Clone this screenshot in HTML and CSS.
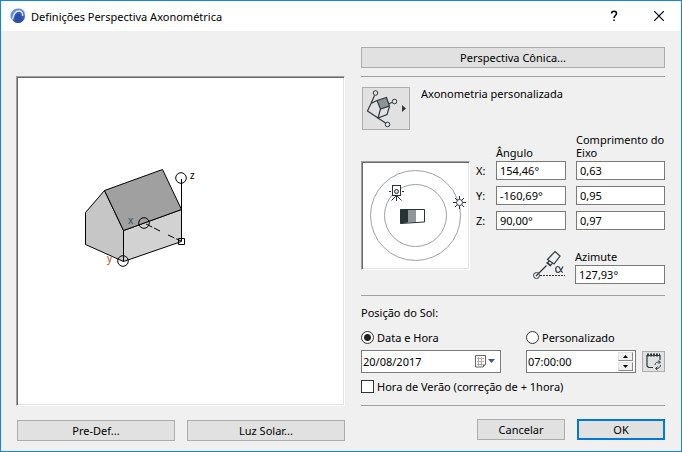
FILE: index.html
```
<!DOCTYPE html>
<html lang="pt-BR">
<head>
    <meta charset="utf-8">
    <title>Definições Perspectiva Axonométrica</title>
    <link rel="stylesheet" href="styles.css">
</head>
<body>
    <div class="window">
        <header class="titlebar">
            <svg class="logo" width="16" height="16" viewBox="0 0 16 16">
                <circle cx="8" cy="8" r="7" fill="#3f62b8"/>
                <path d="M0.500 9C0 3 5 0 9 0.500c4 0.500 6 3 6.500 6-2-4-5-5-8-3.500C4.500 4.500 3 7 2.500 11.500 1.500 11 0.800 10 0.500 9z" fill="#5f8ff0"/>
                <path d="M2.500 11.500C3.500 6 6 3 9 3c3 0 3.800 2.500 3.800 5" fill="none" stroke="#e6effc" stroke-width="1.300"/>
                <path d="M4 13.500C4.500 9 6 5.500 8.500 5.500c2.500 0 2.700 4 4.500 7-2.500 3-6.500 3-9 1z" fill="#2c50aa"/>
            </svg>
            <h1 class="title">Definições Perspectiva Axonométrica</h1>
            <button class="title-btn" aria-label="Ajuda">
                <svg width="10" height="12" viewBox="0 0 10 12">
                    <path d="M2.500 3.500C2.500 0.500 7.500 0.500 7.500 3.500 7.500 5.500 5 5.500 5 8M5 9.500v1.500" fill="none" stroke="#000" stroke-width="1.500"/>
                </svg>
            </button>
            <button class="title-btn" aria-label="Fechar">
                <svg width="10" height="10" viewBox="0 0 10 10">
                    <path d="M0 0l10 10M10 0L0 10" stroke="#000" stroke-width="1.200"/>
                </svg>
            </button>
        </header>

        <main class="content">
            <section class="left">
                <div class="frame preview">
                    <svg width="180" height="200" viewBox="18 78 180 200">
                        <g stroke="#000" stroke-linejoin="round">
                            <polygon points="85.500,212.500 104.500,190.500 123.500,230.500 123.500,261.500 85.500,244.500" fill="#c6c6c6"/>
                            <polygon points="123.500,230.500 181.500,209.500 181.500,241.500 123.500,261.500" fill="#d2d2d2"/>
                            <polygon points="104.500,190.500 162.500,169.500 181.500,209.500 123.500,230.500" fill="#a0a0a0"/>
                            <path d="M181.500 179v62" fill="none"/>
                            <path d="M146 224l14 7M168 235l13 6" fill="none" stroke-dasharray="7 2"/>
                            <circle cx="181" cy="178" r="5.300" fill="#fff"/>
                            <path d="M181.500 179v6"/>
                            <circle cx="144" cy="223" r="5.300" fill="none"/>
                            <circle cx="123" cy="261" r="5.300" fill="none"/>
                            <rect x="178.500" y="238.500" width="6" height="6" fill="none"/>
                        </g>
                        <text class="axis axis-z" x="190" y="175">z</text>
                        <text class="axis axis-x" x="128" y="220">x</text>
                        <text class="axis axis-y" x="107" y="258">y</text>
                    </svg>
                </div>
                <div class="preview-buttons">
                    <button class="btn">Pre-Def...</button>
                    <button class="btn">Luz Solar...</button>
                </div>
            </section>

            <section class="right">
                <button class="btn">Perspectiva Cônica...</button>
                <hr class="top-line">

                <div class="projection">
                    <button class="projection-btn" aria-label="Tipo de axonometria">
                        <svg width="46" height="41" viewBox="363 88 46 41">
                            <g fill="none" stroke="#2b3a40">
                                <path d="M374.500 95.500L371 103.500L367.500 111 378 118l7.500 5M371 103.500l6-3M380.500 109l-2.500 9 9-3.500 2.500-8M392 102.500l-4 1.500" stroke-width="1.200"/>
                                <polygon points="377,100.500 386.500,97.500 389.500,106 380.500,109" fill="#8d9498" stroke-width="1.200"/>
                                <circle cx="375.500" cy="93" r="2.300"/>
                                <circle cx="394.500" cy="101.500" r="2.300"/>
                                <circle cx="387.500" cy="124.500" r="2.300"/>
                            </g>
                            <path d="M402 105v7l4-3.500z" fill="#2b3a40"/>
                        </svg>
                    </button>
                    <span>Axonometria personalizada</span>
                </div>

                <div class="axes">
                    <div class="frame sun-map">
                        <svg width="105" height="105" viewBox="363 163 105 105">
                            <g fill="none" stroke="#9aa0a2">
                                <circle cx="415.500" cy="215.500" r="45"/>
                                <circle cx="415.500" cy="215.500" r="31"/>
                            </g>
                            <path d="M400 209.500h8v13l-8 1z" fill="#263238"/>
                            <path d="M408 209.500h8v13h-8z" fill="#90969a"/>
                            <path d="M400.500 209.500h24v12.500l-24 1.500z" fill="none" stroke="#263238"/>
                            <rect x="392.500" y="185.500" width="8" height="10" fill="#fff" stroke="#263238"/>
                            <circle cx="396.500" cy="191.500" r="2" fill="#ddd" stroke="#263238"/>
                            <path d="M389 191.500h2M402 191.500h2M396.500 196v5M396 196l-4.500 4.500M397 196l4.500 4.500" stroke="#263238"/>
                            <circle cx="459.500" cy="202.500" r="3" fill="#fff" stroke="#263238"/>
                            <path d="M459.500 196v3M459.500 206v3M453 202.500h3M463 202.500h3M455 198l2 2M462 205l2 2M464 198l-2 2M457 205l-2 2" stroke="#263238"/>
                        </svg>
                    </div>
                    <table class="axis-table">
                        <thead>
                            <tr>
                                <td></td>
                                <th id="angle">Ângulo</th>
                                <th id="len">Comprimento do Eixo</th>
                            </tr>
                        </thead>
                        <tbody>
                            <tr>
                                <th id="rx">X:</th>
                                <td><input type="text" aria-labelledby="rx angle" value="154,46°"></td>
                                <td><input type="text" aria-labelledby="rx len" value="0,63"></td>
                            </tr>
                            <tr>
                                <th id="ry">Y:</th>
                                <td><input type="text" aria-labelledby="ry angle" value="-160,69°"></td>
                                <td><input type="text" aria-labelledby="ry len" value="0,95"></td>
                            </tr>
                            <tr>
                                <th id="rz">Z:</th>
                                <td><input type="text" aria-labelledby="rz angle" value="90,00°"></td>
                                <td><input type="text" aria-labelledby="rz len" value="0,97"></td>
                            </tr>
                        </tbody>
                    </table>
                    <div class="azimuth">
                        <svg width="32" height="30" viewBox="534 254 32 30">
                            <g fill="none" stroke="#2b3a40">
                                <circle cx="537.500" cy="279.500" r="3"/>
                                <path d="M537 280l10.500-10.500" stroke-width="1.200"/>
                                <path d="M541 279.500h25" stroke-dasharray="2 1"/>
                                <path d="M556 255.500l5 4.500-6 8-6.500-4.500zM550.500 265l-2 1.500 3 3 2-2.500M547.500 266.500l4 3.500" stroke-width="1.200"/>
                                <path d="M564 270.500c-1.500 3-3 6-5 6-3 0-3-6 0-6 2.500 0 2.500 6 5 6" stroke-width="1.200"/>
                            </g>
                        </svg>
                        <div class="azimuth-field">
                            <label for="azimuth">Azimute</label>
                            <input type="text" id="azimuth" value="127,93°">
                        </div>
                    </div>
                </div>
                <hr>

                <div class="sun">
                    <p class="sun-title">Posição do Sol:</p>
                    <label class="option"><input type="radio" name="sun" checked>Data e Hora</label>
                    <label class="option"><input type="radio" name="sun">Personalizado</label>
                    <div class="picker">
                        <input type="text" aria-label="Data" value="20/08/2017">
                        <button class="drop" aria-label="Abrir calendário">
                            <svg width="20" height="13" viewBox="0 0 20 13">
                                <path d="M0.500 0.500h10v9l-2.500 2.500h-7.500z" fill="#fff" stroke="#6e6466"/>
                                <path d="M2 3.500h7M2 6.500h7M2 9.500h6M3.500 2v9M6.500 2v9" stroke="#b4b0b2"/>
                                <path d="M8 12V9.500h2.500z" fill="#6e6466"/>
                                <path d="M13 4h7l-3.500 4z" fill="#44587c"/>
                            </svg>
                        </button>
                    </div>
                    <div class="time">
                        <div class="picker">
                            <input type="text" aria-label="Hora" value="07:00:00">
                            <div class="spin">
                                <button aria-label="Aumentar"><svg width="5" height="3" viewBox="0 0 5 3"><path d="M0 3L2.500 0 5 3z"/></svg></button>
                                <button aria-label="Diminuir"><svg width="5" height="3" viewBox="0 0 5 3"><path d="M0 0L2.500 3 5 0z"/></svg></button>
                            </div>
                        </div>
                        <button class="now-btn" aria-label="Data e hora atuais">
                            <svg width="19" height="19" viewBox="0 0 19 19">
                                <path d="M9 15.500H4.500l-1.500-1.500V3.500h13V8" fill="none" stroke="#2b3a40" stroke-width="1.200"/>
                                <path d="M3 3h13" stroke="#2b3a40" stroke-width="3" stroke-dasharray="2 1"/>
                                <path d="M11 13c0-2 2-3.500 5-3M16.500 13c0 2-1.500 3.500-4.500 3.500M14.500 8.500l2 1.500-2 2M13.500 14.500l-2 2 2 1.500" fill="none" stroke="#2b3a40"/>
                            </svg>
                        </button>
                    </div>
                    <label class="option dst"><input type="checkbox">Hora de Verão (correção de + 1hora)</label>
                </div>
                <hr>

                <div class="actions">
                    <button class="btn">Cancelar</button>
                    <button class="btn primary">OK</button>
                </div>
            </section>
        </main>
    </div>
</body>
</html>
```
FILE: styles.css
```
* {
    box-sizing: border-box;
}
body {
    margin: 0;
    font-family: "Noto Sans", "Open Sans", sans-serif;
    font-size: 11px;
    line-height: 13px;
    color: #000;
}
button,
input {
    font: inherit;
    color: inherit;
    margin: 0;
}
button {
    display: flex;
    align-items: center;
    justify-content: center;
    padding: 0;
    border: 1px solid #adadad;
    border-radius: 0;
    background: #e1e1e1;
}
svg {
    display: block;
    flex: none;
}
hr {
    width: 100%;
    height: 1px;
    margin: 0;
    border: 0;
    background: #a0a0a0;
}
.window {
    display: flex;
    flex-direction: column;
    min-height: 100vh;
    border: 1px solid #1883d7;
    background: #f0f0f0;
}

/* title bar */
.titlebar {
    display: flex;
    align-items: center;
    height: 30px;
    padding-left: 9px;
    background: #fff;
}
.title {
    flex: 1;
    margin: 0 0 0 5px;
    font-size: 11px;
    font-weight: normal;
}
.title-btn {
    width: 45px;
    height: 28px;
    border: 0;
    background: none;
}

.content {
    flex: 1;
    display: grid;
    grid-template-columns: 329fr 304fr;
    gap: 16px;
    padding: 16px 16px 10px 15px;
}
.left,
.right {
    display: flex;
    flex-direction: column;
    min-width: 0;
}
.btn {
    height: 21px;
}
.frame {
    border: 1px solid;
    border-color: #a0a0a0 #fff #fff #a0a0a0;
    background: #fff;
    box-shadow: inset 1px 1px #696969, inset -1px -1px #e3e3e3;
    padding: 1px;
}

/* preview */
.preview {
    flex: 1;
    margin-top: 29px;
}
.preview-buttons {
    display: grid;
    grid-template-columns: 1fr 1fr;
    gap: 12px;
    margin-top: 14px;
    padding-left: 1px;
}
.axis {
    font-size: 10px;
    dominant-baseline: central;
}
.axis-x {
    fill: #1b4f78;
}
.axis-y {
    fill: #a3521d;
}

/* axonometry */
.top-line {
    margin-top: 8px;
}
.projection {
    display: flex;
    gap: 11px;
    margin: 10px 0 31px;
    padding-left: 1px;
}
.projection-btn {
    width: 48px;
    height: 43px;
}
.axes {
    display: grid;
    grid-template-columns: 109px 1fr;
    column-gap: 6px;
    margin-bottom: 11px;
}
.sun-map {
    width: 109px;
    height: 109px;
}
.axis-table {
    width: 100%;
    height: 97px;
    margin-top: -28px;
    border-collapse: collapse;
    table-layout: fixed;
}
.axis-table th,
.axis-table td {
    padding: 0 0 6px;
    text-align: left;
    font-weight: normal;
}
.axis-table thead th {
    padding: 0 0 2px;
    vertical-align: bottom;
}
.axis-table th:first-child,
.axis-table td:first-child {
    width: 20px;
}
.axis-table td:nth-child(2),
.axis-table th:nth-child(2) {
    width: 80px;
    padding-right: 10px;
}
.axis-table input,
.azimuth input {
    display: block;
    width: 100%;
    height: 19px;
    padding: 0 3px;
    border: 1px solid #7a7a7a;
    background: #fff;
}
.azimuth {
    grid-column: 1 / -1;
    display: flex;
    justify-content: flex-end;
    gap: 10px;
    margin-top: -20px;
}
.azimuth-field {
    display: flex;
    flex-direction: column;
    gap: 2px;
    width: 90px;
}

/* sun position */
.sun {
    display: grid;
    grid-template-columns: 140px minmax(0, 1fr);
    column-gap: 25px;
    margin-bottom: 12px;
}
.sun-title {
    grid-column: 1 / -1;
    margin: 10px 0 12px;
}
.option {
    display: flex;
    align-items: center;
    gap: 3px;
}
.option input {
    flex: none;
    appearance: none;
    width: 13px;
    height: 13px;
    border: 1px solid #333;
    background: #fff;
}
.option input[type="radio"] {
    border-radius: 50%;
}
.option input[type="radio"]:checked {
    background: radial-gradient(#222 0 3px, #fff 4px);
}
.picker {
    display: flex;
    align-items: center;
    flex: 1;
    min-width: 0;
    height: 23px;
    margin-top: 6px;
    padding: 0 2px 0 1px;
    border: 1px solid #7a7a7a;
    background: #fff;
}
.picker input {
    flex: 1;
    min-width: 0;
    padding: 0;
    border: 0;
    background: none;
}
.drop {
    margin-right: 3px;
    border: 0;
    background: none;
}
.time {
    display: flex;
    align-items: center;
    gap: 6px;
}
.spin {
    display: flex;
    flex-direction: column;
    gap: 1px;
}
.spin button {
    width: 15px;
    height: 9px;
    border-color: #e3e3e3 #888 #888 #e3e3e3;
    background: #f0f0f0;
}
.now-btn {
    width: 23px;
    height: 21px;
    margin-top: 6px;
}
.dst {
    grid-column: 1 / -1;
    margin-top: 7px;
}

.actions {
    display: flex;
    justify-content: flex-end;
    gap: 12px;
    margin-top: 13px;
}
.actions .btn {
    width: 88px;
}
.actions .primary {
    border: 2px solid #0078d7;
}
```
